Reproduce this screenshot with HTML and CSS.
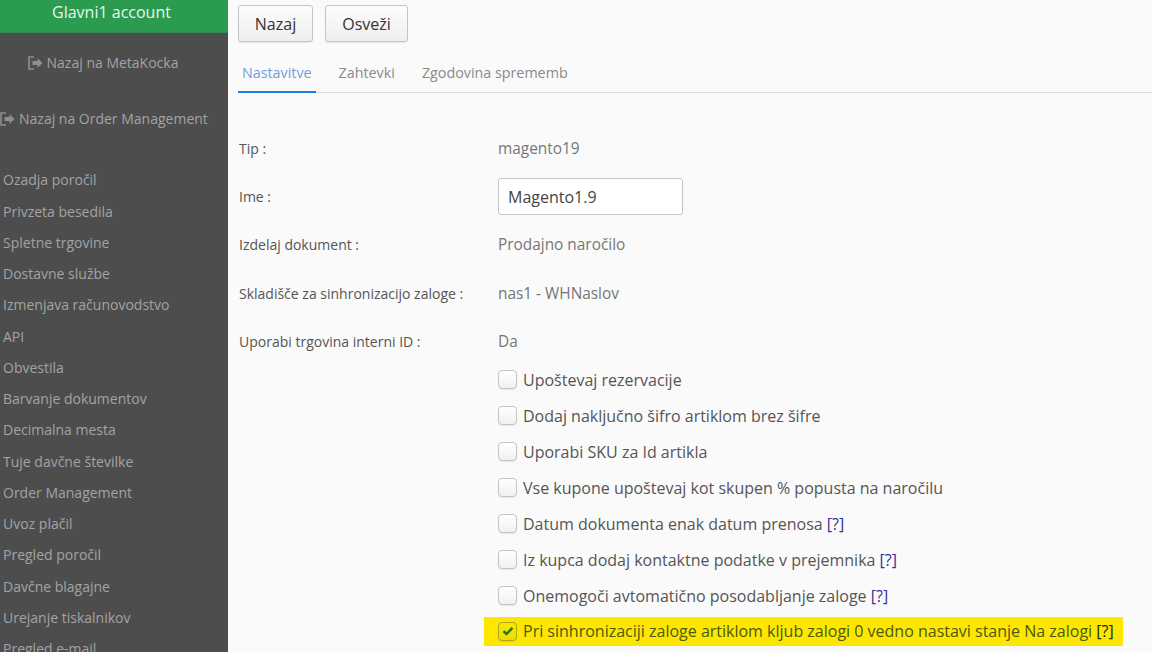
FILE: index.html
```html
<!DOCTYPE html>
<html lang="sl">
<head>
<meta charset="utf-8">
<title>Glavni1 account</title>
<link rel="stylesheet" href="styles.css">
</head>
<body>
<div class="app">
  <aside class="sidebar">
    <div class="account">Glavni1 account</div>
    <a class="back back-first"><svg class="exit" viewBox="0 0 15 14"><path d="M6 1H1v12h5" fill="none" stroke="currentColor" stroke-width="1.600"/><path d="M4.500 5h5V2L14.500 7l-5 5V9h-5z" fill="currentColor"/></svg>Nazaj na MetaKocka</a>
    <a class="back back-second"><svg class="exit" viewBox="0 0 15 14"><path d="M6 1H1v12h5" fill="none" stroke="currentColor" stroke-width="1.600"/><path d="M4.500 5h5V2L14.500 7l-5 5V9h-5z" fill="currentColor"/></svg>Nazaj na Order Management</a>
    <nav class="menu">
      <a>Ozadja poročil</a>
      <a>Privzeta besedila</a>
      <a>Spletne trgovine</a>
      <a>Dostavne službe</a>
      <a>Izmenjava računovodstvo</a>
      <a>API</a>
      <a>Obvestila</a>
      <a>Barvanje dokumentov</a>
      <a>Decimalna mesta</a>
      <a>Tuje davčne številke</a>
      <a>Order Management</a>
      <a>Uvoz plačil</a>
      <a>Pregled poročil</a>
      <a>Davčne blagajne</a>
      <a>Urejanje tiskalnikov</a>
      <a>Pregled e-mail</a>
    </nav>
  </aside>
  <main class="content">
    <div class="actions">
      <button class="btn btn-back">Nazaj</button>
      <button class="btn btn-refresh">Osveži</button>
    </div>
    <div class="tabs">
      <a class="tab active">Nastavitve</a>
      <a class="tab">Zahtevki</a>
      <a class="tab">Zgodovina sprememb</a>
    </div>
    <div class="form">
      <div class="row"><span class="label">Tip :</span><span class="value">magento19</span></div>
      <div class="row"><span class="label">Ime :</span><input class="input" type="text" value="Magento1.9"></div>
      <div class="row"><span class="label">Izdelaj dokument :</span><span class="value">Prodajno naročilo</span></div>
      <div class="row"><span class="label">Skladišče za sinhronizacijo zaloge :</span><span class="value">nas1 - WHNaslov</span></div>
      <div class="row"><span class="label">Uporabi trgovina interni ID :</span><span class="value">Da</span></div>
    </div>
    <div class="checks">
      <label class="check"><span class="box"></span>Upoštevaj rezervacije</label>
      <label class="check"><span class="box"></span>Dodaj naključno šifro artiklom brez šifre</label>
      <label class="check"><span class="box"></span>Uporabi SKU za Id artikla</label>
      <label class="check"><span class="box"></span>Vse kupone upoštevaj kot skupen % popusta na naročilu</label>
      <label class="check"><span class="box"></span>Datum dokumenta enak datum prenosa&nbsp;<a class="help">[?]</a></label>
      <label class="check"><span class="box"></span>Iz kupca dodaj kontaktne podatke v prejemnika&nbsp;<a class="help">[?]</a></label>
      <label class="check"><span class="box"></span>Onemogoči avtomatično posodabljanje zaloge&nbsp;<a class="help">[?]</a></label>
      <label class="check highlighted"><span class="box checked"><svg class="tick" viewBox="0 0 12 10"><path d="M1.500 5.200 4.500 8 10.500 1.800" fill="none" stroke="currentColor" stroke-width="2.400"/></svg></span>Pri sinhronizaciji zaloge artiklom kljub zalogi 0 vedno nastavi stanje Na zalogi&nbsp;<a class="help help-dark">[?]</a></label>
    </div>
  </main>
</div>
</body>
</html>
```
FILE: styles.css
```css
* { box-sizing: border-box; }
html, body { margin: 0; height: 652px; overflow: hidden; }
body { font-family: "Open Sans", sans-serif; font-size: 14px; color: #555; background: #fafafa; }
.app { display: flex; height: 652px; overflow: hidden; }
.sidebar { flex: 0 0 228px; background: #4d4d4d; color: #a3a3a3; overflow: hidden; }
.account { height: 33px; padding-right: 5px; background: #2b9b4f; color: #e8f5ec; font-size: 16px; line-height: 24px; text-align: center; border-bottom: 1px solid #2a8d49; }
.back { display: block; text-align: center; line-height: 20px; white-space: nowrap; padding-right: 22px; }
.back-first { margin-top: 20px; }
.back-second { margin-top: 36px; }
.exit { width: 15px; height: 14px; margin-right: 4px; vertical-align: -2px; color: #8f8f8f; }
.menu { margin-top: 41.300px; padding-left: 3px; }
.menu a { display: block; height: 31.270px; line-height: 20px; white-space: nowrap; }
.content { flex: 1; padding: 5px 0 0 10px; min-width: 0; }
.actions { display: flex; gap: 12px; }
.btn { height: 37px; border: 1px solid #c4c4c4; border-radius: 3px; background: linear-gradient(#fcfcfc, #efefef); box-shadow: 0 1px 1px rgba(0,0,0,.08); font: 16px "Open Sans", sans-serif; color: #333; padding: 0; }
.btn-back { width: 75px; }
.btn-refresh { width: 83px; }
.tabs { display: flex; gap: 19px; height: 51px; border-bottom: 1px solid #ddd; }
.tab { padding: 21px 4px 0; height: 51px; line-height: 20px; font-size: 14.300px; color: #8a8a8a; }
.tab.active { color: #6f9fe0; border-bottom: 2px solid #1e7ee4; }
.form { margin-top: 31px; }
.row { display: flex; align-items: center; height: 48.400px; }
.label { flex: 0 0 260px; padding-left: 1px; font-size: 14px; color: #555; }
.value { color: #777; font-size: 15.400px; }
.input { width: 185px; height: 37px; border: 1px solid #c6c6c6; border-radius: 3px; background: #fff; padding: 0 9px; font: 16px "Open Sans", sans-serif; color: #444; }
.checks { margin-left: 246px; margin-top: -4px; }
.check { display: flex; align-items: center; height: 36px; padding-left: 14px; white-space: nowrap; font-size: 16px; color: #555; }
.box { flex: 0 0 19px; width: 19px; height: 19px; margin-right: 6px; border: 1px solid #c4c4c4; border-radius: 4px; background: linear-gradient(#fff, #f0f0f0); box-shadow: 0 1px 1px rgba(0,0,0,.08); display: flex; align-items: center; justify-content: center; }
.box.checked { background: linear-gradient(#fde600, #f2dc00); border-color: #a8a820; }
.tick { width: 12px; height: 10px; color: #1a7a1a; }
.help { color: #34309a; }
.highlighted { width: 639px; height: 29px; margin-top: 3px; background: #fde600; color: #4a5a10; }
.help-dark { color: #1a2a10; }
```
